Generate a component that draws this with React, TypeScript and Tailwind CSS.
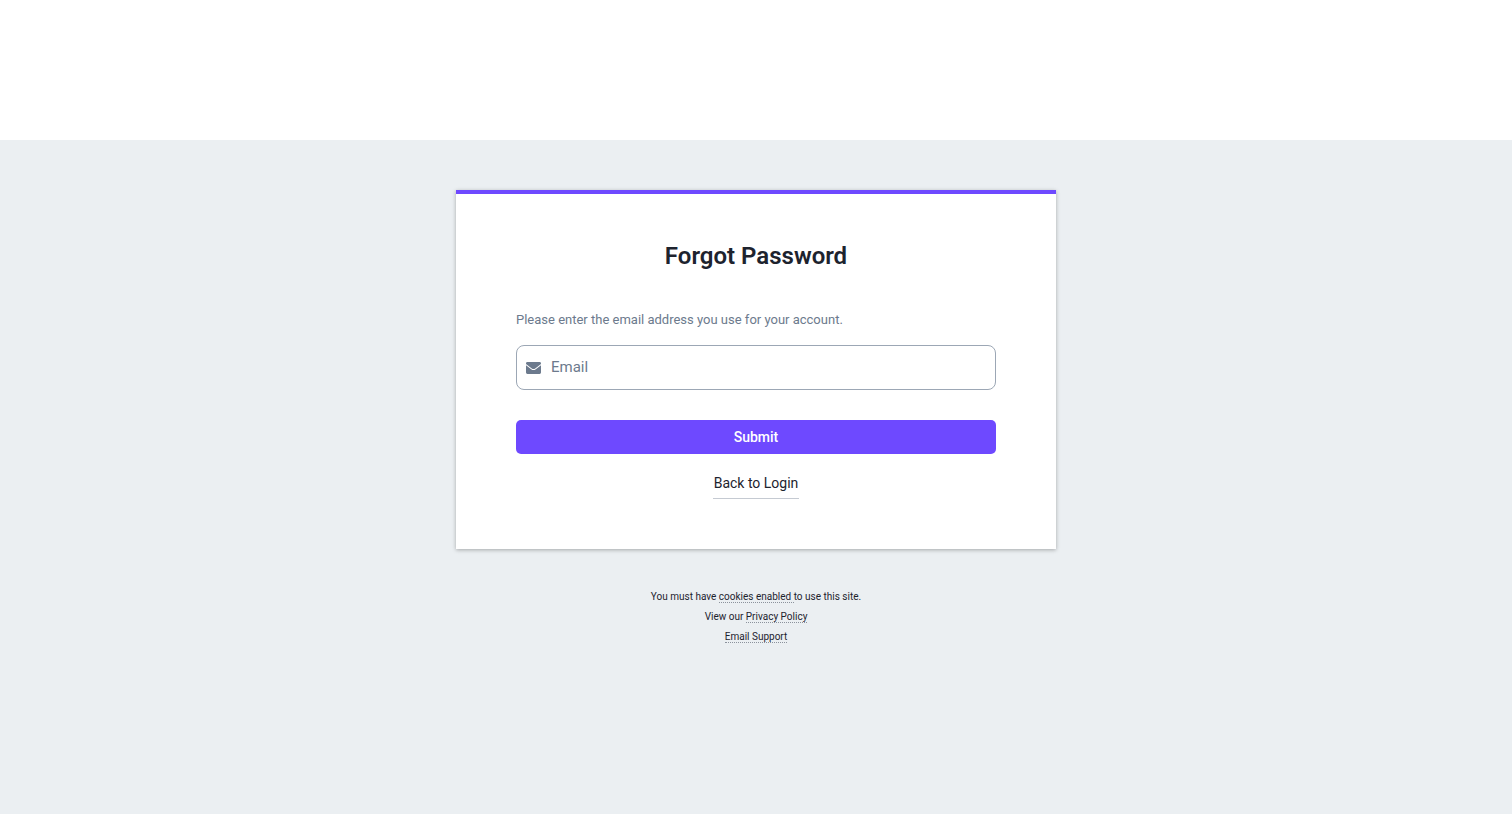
import { useState } from 'react'

export default function App() {
  const [email, setEmail] = useState('')

  function handleSubmit(e: React.FormEvent) {
    e.preventDefault()
  }

  return (
    <div className="flex min-h-screen flex-col bg-white font-['Roboto',sans-serif] text-[#1d232e]">
      <header className="h-[140px]" />

      <main className="flex flex-1 flex-col items-center bg-[#ebeff2] px-4 py-[50px]">
        <section className="w-full max-w-[600px] border-t-4 border-[#6e49ff] bg-white px-[60px] py-[50px] text-center shadow-[0_1px_4px_rgba(0,0,0,0.3)]">
          <h1 className="text-2xl leading-6 font-semibold">Forgot Password</h1>

          <form onSubmit={handleSubmit} className="mt-11">
            <label htmlFor="email" className="block text-left text-[13px] leading-4 text-[#6c7a8d]">
              Please enter the email address you use for your account.
            </label>
            <div className="mt-[17px] flex h-[45px] items-center gap-2.5 rounded-lg border border-[#9ca7b5] px-[9px] focus-within:border-[#6e49ff]">
              <MailIcon />
              <input
                id="email"
                type="email"
                placeholder="Email"
                value={email}
                onChange={e => setEmail(e.target.value)}
                className="min-w-0 flex-1 bg-transparent text-[15px] outline-none placeholder:text-[#6c7a8d]"
              />
            </div>
            <button
              type="submit"
              className="mt-[30px] h-[34px] w-full rounded-[5px] bg-[#6e49ff] text-sm font-medium text-white"
            >
              Submit
            </button>
          </form>

          <a href="#login" className="mt-5 inline-block border-b border-[#c5cad2] px-px pb-[5px] text-sm leading-[19px]">
            Back to Login
          </a>
        </section>

        <footer className="mt-[38px] text-center text-[10px] leading-5 text-[#1d232e]">
          <p>
            You must have <FooterLink href="#cookies">cookies enabled </FooterLink>to use this site.
          </p>
          <p>
            View our <FooterLink href="#privacy">Privacy Policy</FooterLink>
          </p>
          <p>
            <FooterLink href="#support">Email Support</FooterLink>
          </p>
        </footer>
      </main>
    </div>
  )
}

function FooterLink({ href, children }: { href: string; children: React.ReactNode }) {
  return (
    <a href={href} className="border-b border-dotted border-[#8b929c]">
      {children}
    </a>
  )
}

function MailIcon() {
  return (
    <svg aria-hidden viewBox="0 0 15 12" className="h-3 w-[15px] shrink-0 fill-[#6c7a8d]">
      <path d="M1.4 0h12.2A1.4 1.4 0 0 1 15 1.4v.5L9.2 6.4Q7.5 7.7 5.8 6.4L0 1.9v-.5A1.4 1.4 0 0 1 1.4 0Z" />
      <path d="M0 3.2l5.2 4q2.3 1.7 4.6 0l5.2-4v7.4a1.4 1.4 0 0 1-1.4 1.4H1.4A1.4 1.4 0 0 1 0 10.6Z" />
    </svg>
  )
}
